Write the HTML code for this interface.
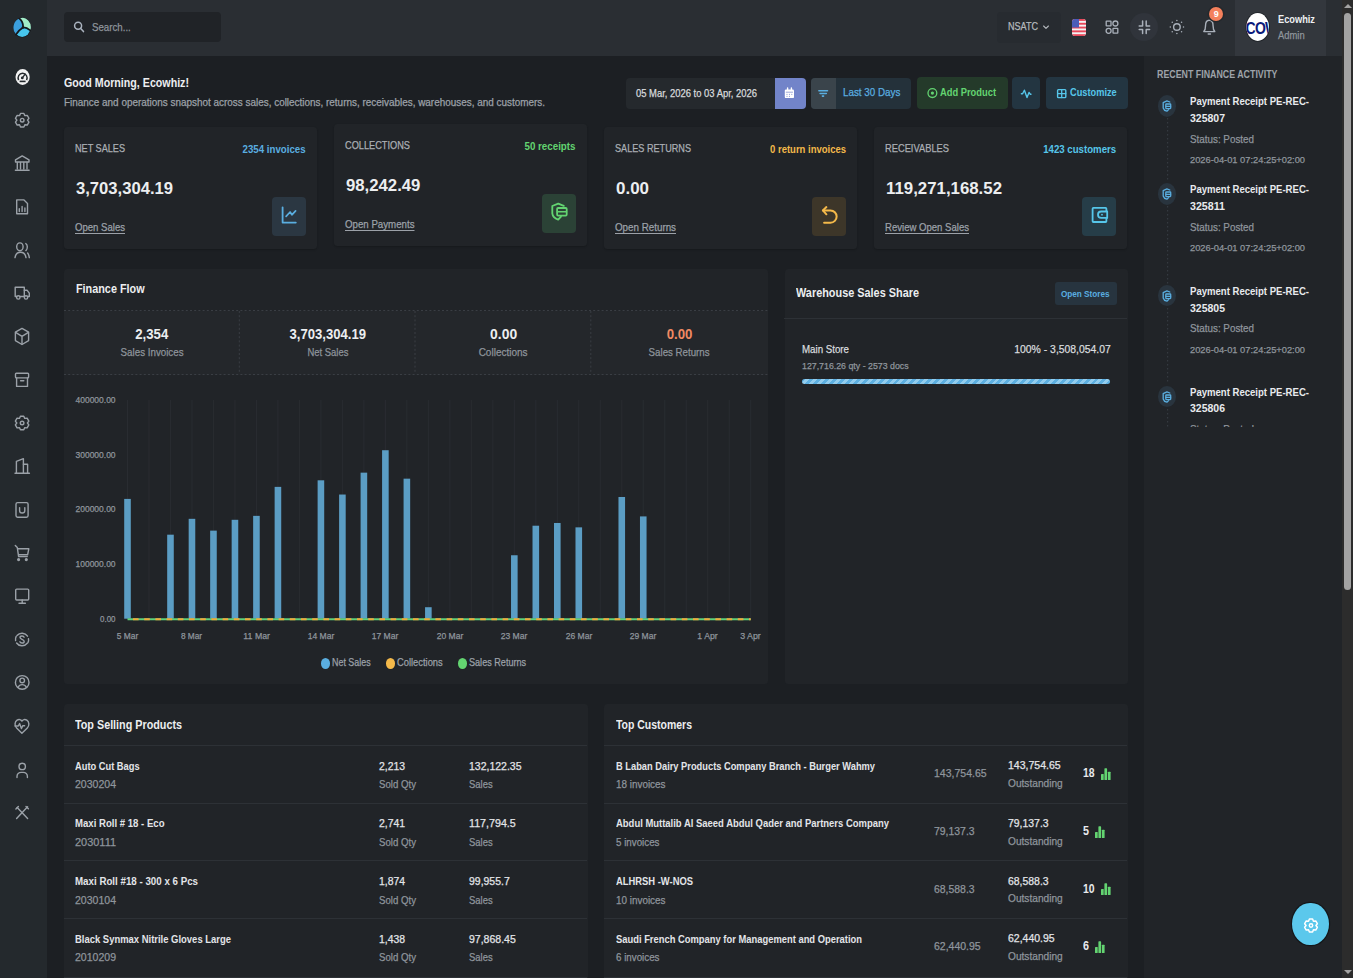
<!DOCTYPE html>
<html><head><meta charset="utf-8">
<style>
*{box-sizing:border-box;margin:0;padding:0}
html,body{width:1353px;height:978px;overflow:hidden;background:#1c1f23;font-family:"Liberation Sans", sans-serif;color:#e3e5e8}
.a{position:absolute}
.t{white-space:nowrap}
.u{text-decoration:underline;text-underline-offset:2px}
</style></head><body>
<div class="a" style="left:0px;top:0px;width:47px;height:978px;background:#24292d;border-radius:0px;"></div>
<div class="a" style="left:47px;top:0px;width:1295px;height:56px;background:#2a2e33;border-radius:0px;"></div>
<div class="a" style="left:1144px;top:56px;width:198px;height:922px;background:#212428;border-radius:0px;"></div>
<div class="a" style="left:1342px;top:0px;width:11px;height:978px;background:#2c2c2c;border-radius:0px;"></div>
<div class="a" style="left:1344px;top:13px;width:7px;height:577px;background:#a3a3a3;border-radius:4px;"></div>
<svg class="a" style="left:1343px;top:2px" width="10" height="8"><path d="M1 6 L5 2 L9 6 Z" fill="#a3a3a3"/></svg>
<svg class="a" style="left:1343px;top:968px" width="10" height="8"><path d="M1 2 L5 6 L9 2 Z" fill="#a3a3a3"/></svg>
<svg class="a" style="left:13px;top:17px" width="18" height="21" viewBox="0 0 18 21">
<ellipse cx="9.2" cy="10.6" rx="8.7" ry="10" fill="#15191d"/>
<ellipse cx="9.2" cy="10.6" rx="8.1" ry="9.4" fill="#47c6ee"/>
<path d="M10 10.5 Q6.5 12.5 3 17.5 A8.1 9.4 0 0 1 6.5 1.6 Q10.5 5 10 10.5Z" fill="#3b9fdd"/>
<path d="M10 10.5 Q10.5 5 6.5 1.6 A8.1 9.4 0 0 1 17.3 13.4 Q13 10 10 10.5Z" fill="#a2ecc8"/>
<path d="M6.5 1.6 Q10.5 5 10 10.5 Q13 10 17.3 13.4 M10 10.5 Q6.5 12.5 3 17.5" fill="none" stroke="#15191d" stroke-width="1.8" stroke-linecap="round"/>
<circle cx="10" cy="10.5" r="1.3" fill="#15191d"/>
</svg>
<svg class="a" style="left:14.5px;top:69px" width="15" height="16" viewBox="0 0 15 16">
<ellipse cx="7.6" cy="8" rx="7.1" ry="7.9" fill="#f2f2f2"/>
<path d="M3.6 11.2 A4.5 4.8 0 1 1 11.6 11.2" fill="none" stroke="#24292d" stroke-width="1.5"/>
<path d="M4.6 12.4 H10.6" stroke="#24292d" stroke-width="1.6"/>
<circle cx="7.3" cy="8.9" r="1.4" fill="#24292d"/>
<path d="M7.3 8.9 L10.2 5.2" stroke="#24292d" stroke-width="1.3" stroke-linecap="round"/>
</svg>
<svg class="a" style="left:0;top:0" width="47" height="978" viewBox="0 0 47 978" fill="none" stroke="#9ba1a8" stroke-width="1.4" stroke-linecap="round" stroke-linejoin="round"><path d="M19.55 115.61 L20.51 113.41 L23.89 113.41 L24.85 115.61 L27.24 115.34 L28.93 118.27 L27.50 120.20 L28.93 122.13 L27.24 125.06 L24.85 124.79 L23.89 126.99 L20.51 126.99 L19.55 124.79 L17.16 125.06 L15.47 122.13 L16.90 120.20 L15.47 118.27 L17.16 115.34Z"/><circle cx="22.2" cy="120.2" r="1.8"/><path d="M15.5 162 V159.8 L22.2 155.9 L29 159.8 V162 Z"/><path d="M17.3 162.5V169M20.5 162.5V169M23.8 162.5V169M27 162.5V169"/><path d="M15.4 170.3H29.1"/><path d="M16.7 199.9 H24 L27.5 203.4 V213.8 H16.7 Z"/><path d="M19.3 211.6V208.8M22.1 211.6V206.4M24.9 211.6V208"/><ellipse cx="19.9" cy="246.8" rx="3.2" ry="3.9"/><path d="M15 257.6 C15.6 254 17.6 252.3 20.5 252.3 C23.4 252.3 25.4 254 26 257.6"/><path d="M25.8 243.6 C27.8 244.6 27.8 249 25.9 250.6"/><path d="M27.6 253 C28.6 254.2 29 255.6 29.3 257.6"/><path d="M16.5 296.5 H15.2 V287.3 H24.3 V296.5 H20"/><path d="M24.3 290.3 H27.2 L29.3 293.2 V296.5 H28"/><circle cx="18.3" cy="297.4" r="1.7"/><circle cx="26" cy="297.4" r="1.7"/><path d="M22 328.4 L28.6 332.2 V340.6 L22 344.5 L15.4 340.6 V332.2 Z"/><path d="M15.6 332.4 L22 336.3 L28.4 332.4 M22 336.3 V344.3"/><rect x="15.5" y="373.2" width="13.1" height="4.7" rx="0.8"/><path d="M16.6 377.9 V386.4 H27.5 V377.9"/><path d="M20.6 380.8 H23.8"/><path d="M19.45 418.41 L20.41 416.21 L23.79 416.21 L24.75 418.41 L27.14 418.14 L28.83 421.07 L27.40 423.00 L28.83 424.93 L27.14 427.86 L24.75 427.59 L23.79 429.79 L20.41 429.79 L19.45 427.59 L17.06 427.86 L15.37 424.93 L16.80 423.00 L15.37 421.07 L17.06 418.14Z"/><circle cx="22.1" cy="423" r="1.8"/><path d="M15 473.2 H29.4"/><path d="M16.4 473 V461.3 L23.4 458.7 V473"/><path d="M23.4 464.2 H27.6 V473"/><rect x="16" y="502.6" width="12.1" height="14.6" rx="1.6"/><path d="M19.6 507.6 V510.4 A2.6 2.6 0 0 0 24.8 510.4 V507.6"/><path d="M15.3 545.5 L17.3 547.6 L18.6 556.6 H27.3 M17.5 548.8 H28.8 L27.6 554.8 H18.4"/><circle cx="18.6" cy="559.6" r="0.9" fill="#9ba1a8"/><circle cx="26.3" cy="559.6" r="0.9" fill="#9ba1a8"/><rect x="15.7" y="589.1" width="13" height="10.9" rx="1"/><path d="M22.2 600 V603 M19 603.2 H25.4"/><path d="M17 635.5 A6.6 6.6 0 0 1 27.5 636.2"/><path d="M27.2 643.3 A6.6 6.6 0 0 1 16.6 643"/><path d="M15.6 640.6 A6.6 6.6 0 0 1 16.2 636.4"/><path d="M28.5 638.6 A6.6 6.6 0 0 1 27.9 642.8"/><path d="M24.1 637.2 C23.8 636.4 23 636 22 636 C20.8 636 20 636.7 20 637.6 C20 639.6 24.2 639.2 24.2 641.4 C24.2 642.4 23.3 643 22 643 C21 643 20.2 642.6 19.9 641.8"/><circle cx="22.2" cy="682.4" r="6.8"/><circle cx="22.2" cy="680.4" r="2.3"/><path d="M17.9 687.3 C19 685.4 20.5 684.6 22.2 684.6 C23.9 684.6 25.4 685.4 26.5 687.3"/><path d="M21.9 733.2 L16.6 728 C14.3 725.7 14.6 721.9 17.1 720.2 C19 719 21 719.6 21.9 721.1 C22.8 719.6 24.9 719 26.8 720.2 C29.3 721.9 29.6 725.7 27.3 728 L21.9 733.2 Z"/><path d="M15 726 H18.3 L19.6 723.6 L21.4 728.6 L22.7 725.8 H24.6"/><circle cx="22.2" cy="766.4" r="3.2"/><path d="M17 777.6 V776.6 C17 774.2 18.8 772.4 21.2 772.4 H23.2 C25.6 772.4 27.4 774.2 27.4 776.6 V777.6"/><path d="M16.6 818.4 L27.6 806.8"/><path d="M17.2 807.6 L27.6 818.4"/><path d="M15.9 808.9 L18.4 806.4"/><path d="M26 806.4 L28.4 808.8"/></svg>
<div class="a" style="left:64px;top:12px;width:157px;height:30px;background:#202327;border-radius:4px;"></div>
<svg class="a" style="left:0;top:0" width="240" height="56" fill="none" stroke="#aab3bf" stroke-width="1.5" stroke-linecap="round"><circle cx="78.1" cy="25.7" r="3.5"/><path d="M80.7 28.4 L83.5 31.6"/></svg>
<div class="a t" style="left:92px;top:22.07px;font-size:11.5px;line-height:11.5px;color:#8f959c;font-weight:400;"><span id="t0" style="display:inline-block;transform:scaleX(0.8429);transform-origin:left;-webkit-text-stroke:0.25px currentColor;">Search...</span></div>
<div class="a" style="left:997px;top:12px;width:64px;height:31px;background:#272b30;border-radius:4px;"></div>
<div class="a t" style="left:1008px;top:21.47px;font-size:11.5px;line-height:11.5px;color:#b5b9be;font-weight:400;"><span id="t1" style="display:inline-block;transform:scaleX(0.7869);transform-origin:left;-webkit-text-stroke:0.25px currentColor;">NSATC</span></div>
<svg class="a" style="left:0;top:0" width="1353" height="56" fill="none" stroke-linecap="round" stroke-linejoin="round"><path d="M1043.6 26 L1046 28.4 L1048.4 26" stroke="#b5b9be" stroke-width="1.1"/><g stroke="#a9b0ba" stroke-width="1.3"><rect x="1106.2" y="21.1" width="4.8" height="4.8" rx="0.4"/><circle cx="1115.4" cy="23.5" r="2.5"/><circle cx="1108.6" cy="30.8" r="2.5"/><rect x="1113" y="28.4" width="4.8" height="4.8" rx="0.4"/></g></svg>
<svg class="a" style="left:1072px;top:18.5px" width="14" height="17" viewBox="0 0 14 17">
<defs><clipPath id="fc"><rect x="0" y="0" width="14" height="17" rx="3"/></clipPath></defs>
<g clip-path="url(#fc)"><rect width="14" height="17" fill="#f3f3f3"/>
<rect y="0" width="14" height="1.9" fill="#e8475a"/><rect y="3.8" width="14" height="1.9" fill="#e8475a"/><rect y="7.6" width="14" height="1.9" fill="#e8475a"/><rect y="11.4" width="14" height="1.9" fill="#e8475a"/><rect y="15.2" width="14" height="1.9" fill="#e8475a"/>
<rect width="7" height="8.5" fill="#4b5cb8"/></g></svg>
<div class="a" style="left:1129.7px;top:13px;width:28px;height:28px;background:#30343b;border-radius:14px;"></div>
<svg class="a" style="left:0;top:0" width="1353" height="56" fill="none" stroke-linecap="round" stroke-linejoin="round"><g stroke="#a9b0ba" stroke-width="1.5"><path d="M1142.6 21.1 V25.9 H1139.2"/><path d="M1146.2 21.1 V25.9 H1149.6"/><path d="M1139.2 29.5 H1142.6 V33.4"/><path d="M1149.6 29.5 H1146.2 V33.4"/></g><circle cx="1176.9" cy="27" r="3.3" stroke="#a9b0ba" stroke-width="1.4"/><circle cx="1183.50" cy="27.00" r="0.75" fill="#a9b0ba" stroke="none"/><circle cx="1181.57" cy="31.67" r="0.75" fill="#a9b0ba" stroke="none"/><circle cx="1176.90" cy="33.60" r="0.75" fill="#a9b0ba" stroke="none"/><circle cx="1172.23" cy="31.67" r="0.75" fill="#a9b0ba" stroke="none"/><circle cx="1170.30" cy="27.00" r="0.75" fill="#a9b0ba" stroke="none"/><circle cx="1172.23" cy="22.33" r="0.75" fill="#a9b0ba" stroke="none"/><circle cx="1176.90" cy="20.40" r="0.75" fill="#a9b0ba" stroke="none"/><circle cx="1181.57" cy="22.33" r="0.75" fill="#a9b0ba" stroke="none"/><path d="M1203.8 31.6 C1205.3 30.2 1205.5 28.6 1205.5 26 C1205.5 22.4 1207.2 20.3 1209.3 20.3 C1211.4 20.3 1213.1 22.4 1213.1 26 C1213.1 28.6 1213.3 30.2 1214.8 31.6 Z" stroke="#a9b0ba" stroke-width="1.4"/><path d="M1208.2 34 H1210.4" stroke="#a9b0ba" stroke-width="1.4"/></svg>
<div class="a" style="left:1209px;top:7px;width:14px;height:14px;background:#f4805c;border-radius:7px;box-shadow:0 0 0 1.5px #24282c"></div>
<div class="a t" style="left:1016.2px;width:400px;text-align:center;top:9.78px;font-size:9px;line-height:9px;color:#ffffff;font-weight:700;"><span id="t2" style="display:inline-block;transform:scaleX(1.0000);transform-origin:center;">9</span></div>
<div class="a" style="left:1235px;top:0px;width:91px;height:56px;background:#33373d;border-radius:0px;"></div>
<svg class="a" style="left:1245px;top:12px" width="26" height="30" viewBox="0 0 26 30">
<defs><clipPath id="av"><ellipse cx="12.7" cy="15" rx="11.3" ry="13.9"/></clipPath></defs>
<ellipse cx="12.7" cy="15" rx="12.2" ry="14.8" fill="#1f2328"/>
<ellipse cx="12.7" cy="15" rx="11.3" ry="13.9" fill="#ffffff"/>
<g clip-path="url(#av)"><text x="0.6" y="22" font-family="Liberation Sans" font-weight="700" font-size="14" fill="#0b1a7a" letter-spacing="-0.8" transform="translate(0,-4.6) scale(1,1.2)">COW</text></g></svg>
<div class="a t" style="left:1277.7px;top:13.69px;font-size:11px;line-height:11px;color:#eef0f2;font-weight:700;"><span id="t3" style="display:inline-block;transform:scaleX(0.8406);transform-origin:left;">Ecowhiz</span></div>
<div class="a t" style="left:1277.7px;top:30.11px;font-size:10.5px;line-height:10.5px;color:#8f959c;font-weight:400;"><span id="t4" style="display:inline-block;transform:scaleX(0.8936);transform-origin:left;-webkit-text-stroke:0.25px currentColor;">Admin</span></div>
<div class="a t" style="left:64.1px;top:76.52px;font-size:12.5px;line-height:12.5px;color:#eceef0;font-weight:700;"><span id="t5" style="display:inline-block;transform:scaleX(0.8532);transform-origin:left;">Good Morning, Ecowhiz!</span></div>
<div class="a t" style="left:64px;top:97.73px;font-size:10px;line-height:10px;color:#9ca1a8;font-weight:400;"><span id="t6" style="display:inline-block;transform:scaleX(0.9924);transform-origin:left;-webkit-text-stroke:0.25px currentColor;">Finance and operations snapshot across sales, collections, returns, receivables, warehouses, and customers.</span></div>
<div class="a" style="left:626px;top:78px;width:148.5px;height:31px;background:#25292d;border-radius:4px 0 0 4px;"></div>
<div class="a t" style="left:636px;top:88.01px;font-size:10.5px;line-height:10.5px;color:#d8dadd;font-weight:400;"><span id="t7" style="display:inline-block;transform:scaleX(0.8972);transform-origin:left;-webkit-text-stroke:0.25px currentColor;">05 Mar, 2026 to 03 Apr, 2026</span></div>
<div class="a" style="left:774.5px;top:78px;width:31px;height:31px;background:#7284c9;border-radius:0 4px 4px 0;"></div>
<div class="a" style="left:811px;top:78px;width:100px;height:31px;background:#24313a;border-radius:4px;"></div>
<div class="a" style="left:811px;top:78px;width:25px;height:31px;background:#3a444b;border-radius:4px 0 0 4px;"></div>
<div class="a" style="left:917px;top:77px;width:90.5px;height:32px;background:#243a2a;border-radius:4px;"></div>
<div class="a" style="left:1012.3px;top:77px;width:27.7px;height:32px;background:#233541;border-radius:4px;"></div>
<div class="a" style="left:1046px;top:77px;width:82px;height:32px;background:#233541;border-radius:4px;"></div>
<svg class="a" style="left:0;top:0" width="1353" height="120" fill="none" stroke-linecap="round" stroke-linejoin="round"><rect x="784.8" y="89.5" width="9.2" height="8.6" rx="1.2" fill="#ffffff"/><path d="M787.6 88 V90.5 M791.4 88 V90.5" stroke="#ffffff" stroke-width="1.4"/><path d="M786.2 92.2 H792.6" stroke="#7284c9" stroke-width="0.7"/><g fill="#7284c9"><circle cx="787" cy="94.3" r="0.55"/><circle cx="789.4" cy="94.3" r="0.55"/><circle cx="791.8" cy="94.3" r="0.55"/><circle cx="787" cy="96.3" r="0.55"/><circle cx="789.4" cy="96.3" r="0.55"/></g><path d="M818.9 90.7 H827.5 M820.1 93.5 H826.3 M822.4 96.1 H823.6" stroke="#5aaee0" stroke-width="1.6"/><circle cx="932.4" cy="93.1" r="4.4" stroke="#63d471" stroke-width="1.3"/><circle cx="932.4" cy="93.1" r="1.6" fill="#63d471"/><path d="M1021.4 93.7 H1022.6 L1024.4 90.2 L1027 97.5 L1029 92.5 L1030.2 94.2 H1031" stroke="#56c6ea" stroke-width="1.4"/><rect x="1057.6" y="89.6" width="8.2" height="8" rx="0.8" stroke="#56c6ea" stroke-width="1.4"/><path d="M1061.7 89.6 V97.6 M1057.6 93.6 H1065.8" stroke="#56c6ea" stroke-width="1.3"/></svg>
<div class="a t" style="left:842.5px;top:87.29px;font-size:11px;line-height:11px;color:#5aaee0;font-weight:400;"><span id="t8" style="display:inline-block;transform:scaleX(0.8925);transform-origin:left;-webkit-text-stroke:0.25px currentColor;">Last 30 Days</span></div>
<div class="a t" style="left:940px;top:87.19px;font-size:11px;line-height:11px;color:#63d471;font-weight:700;"><span id="t9" style="display:inline-block;transform:scaleX(0.8485);transform-origin:left;">Add Product</span></div>
<div class="a t" style="left:1069.7px;top:87.19px;font-size:11px;line-height:11px;color:#56c6ea;font-weight:700;"><span id="t10" style="display:inline-block;transform:scaleX(0.8396);transform-origin:left;">Customize</span></div>
<div class="a" style="left:64px;top:127px;width:253.3px;height:122px;background:#212428;border-radius:3.5px;box-shadow:0 1px 2px rgba(0,0,0,.2)"></div>
<div class="a t" style="left:75.4px;top:143.17px;font-size:11.5px;line-height:11.5px;color:#abafb5;font-weight:400;"><span id="t11" style="display:inline-block;transform:scaleX(0.7927);transform-origin:left;-webkit-text-stroke:0.25px currentColor;">NET SALES</span></div>
<div class="a t" style="right:1047.2px;top:143.59px;font-size:11px;line-height:11px;color:#5aaee0;font-weight:700;"><span id="t12" style="display:inline-block;transform:scaleX(0.8803);transform-origin:right;">2354 invoices</span></div>
<div class="a t" style="left:75.5px;top:180.11px;font-size:17px;line-height:17px;color:#eceef0;font-weight:700;"><span id="t13" style="display:inline-block;transform:scaleX(0.9772);transform-origin:left;">3,703,304.19</span></div>
<div class="a t" style="left:75.4px;top:221.69px;font-size:11px;line-height:11px;color:#9ca1a8;font-weight:400;"><span id="t14" style="display:inline-block;transform:scaleX(0.8698);transform-origin:left;-webkit-text-stroke:0.25px currentColor;text-decoration:underline;text-underline-offset:1.5px;text-decoration-skip-ink:none;text-decoration-thickness:1px;">Open Sales</span></div>
<div class="a" style="left:272px;top:197px;width:34px;height:39px;background:#2b3742;border-radius:4px;"></div>
<svg class="a" style="left:272px;top:197px" width="34" height="39" fill="none" stroke-linecap="round" stroke-linejoin="round"><path d="M10.6 10.3 V25.6 H23.8" stroke="#5aaee0" stroke-width="1.8"/><path d="M14.1 19.3 L18.1 15 L19.9 17.8 L23.6 13.8" stroke="#5aaee0" stroke-width="1.7"/></svg>
<div class="a" style="left:334px;top:124px;width:253.3px;height:122px;background:#212428;border-radius:3.5px;box-shadow:0 1px 2px rgba(0,0,0,.2)"></div>
<div class="a t" style="left:345.4px;top:140.17px;font-size:11.5px;line-height:11.5px;color:#abafb5;font-weight:400;"><span id="t15" style="display:inline-block;transform:scaleX(0.8008);transform-origin:left;-webkit-text-stroke:0.25px currentColor;">COLLECTIONS</span></div>
<div class="a t" style="right:777.2px;top:140.59px;font-size:11px;line-height:11px;color:#63d471;font-weight:700;"><span id="t16" style="display:inline-block;transform:scaleX(0.8872);transform-origin:right;">50 receipts</span></div>
<div class="a t" style="left:345.5px;top:177.11px;font-size:17px;line-height:17px;color:#eceef0;font-weight:700;"><span id="t17" style="display:inline-block;transform:scaleX(0.9836);transform-origin:left;">98,242.49</span></div>
<div class="a t" style="left:345.4px;top:218.69px;font-size:11px;line-height:11px;color:#9ca1a8;font-weight:400;"><span id="t18" style="display:inline-block;transform:scaleX(0.8811);transform-origin:left;-webkit-text-stroke:0.25px currentColor;text-decoration:underline;text-underline-offset:1.5px;text-decoration-skip-ink:none;text-decoration-thickness:1px;">Open Payments</span></div>
<div class="a" style="left:542px;top:194px;width:34px;height:39px;background:#2b4236;border-radius:4px;"></div>
<svg class="a" style="left:542px;top:194px" width="34" height="39" fill="none" stroke-linecap="round" stroke-linejoin="round"><path d="M21.8 11.9 L16.2 9.6 L10.3 12 V19.4 C10.6 22.4 13 24.5 16.2 25.6 L19 22.6" stroke="#63d471" stroke-width="1.8"/><rect x="15.1" y="14" width="9.6" height="7.6" rx="1" fill="#2b4236" stroke="#63d471" stroke-width="1.8"/><path d="M15.4 17.8 H24.4" stroke="#63d471" stroke-width="1.6"/></svg>
<div class="a" style="left:604px;top:127px;width:253.3px;height:122px;background:#212428;border-radius:3.5px;box-shadow:0 1px 2px rgba(0,0,0,.2)"></div>
<div class="a t" style="left:615.4px;top:143.17px;font-size:11.5px;line-height:11.5px;color:#abafb5;font-weight:400;"><span id="t19" style="display:inline-block;transform:scaleX(0.7928);transform-origin:left;-webkit-text-stroke:0.25px currentColor;">SALES RETURNS</span></div>
<div class="a t" style="right:507.20000000000005px;top:143.59px;font-size:11px;line-height:11px;color:#f4b94a;font-weight:700;"><span id="t20" style="display:inline-block;transform:scaleX(0.8632);transform-origin:right;">0 return invoices</span></div>
<div class="a t" style="left:615.5px;top:180.11px;font-size:17px;line-height:17px;color:#eceef0;font-weight:700;"><span id="t21" style="display:inline-block;transform:scaleX(0.9972);transform-origin:left;">0.00</span></div>
<div class="a t" style="left:615.4px;top:221.69px;font-size:11px;line-height:11px;color:#9ca1a8;font-weight:400;"><span id="t22" style="display:inline-block;transform:scaleX(0.8907);transform-origin:left;-webkit-text-stroke:0.25px currentColor;text-decoration:underline;text-underline-offset:1.5px;text-decoration-skip-ink:none;text-decoration-thickness:1px;">Open Returns</span></div>
<div class="a" style="left:812px;top:197px;width:34px;height:39px;background:#3d3629;border-radius:4px;"></div>
<svg class="a" style="left:812px;top:197px" width="34" height="39" fill="none" stroke-linecap="round" stroke-linejoin="round"><path d="M14.4 10.1 L10.9 13.4 L14.4 17.3" stroke="#f4b94a" stroke-width="2"/><path d="M10.9 13.4 H18.5 A6.15 6.15 0 0 1 18.5 25.7 H12.1" stroke="#f4b94a" stroke-width="2"/></svg>
<div class="a" style="left:874px;top:127px;width:253.3px;height:122px;background:#212428;border-radius:3.5px;box-shadow:0 1px 2px rgba(0,0,0,.2)"></div>
<div class="a t" style="left:885.4px;top:143.17px;font-size:11.5px;line-height:11.5px;color:#abafb5;font-weight:400;"><span id="t23" style="display:inline-block;transform:scaleX(0.8096);transform-origin:left;-webkit-text-stroke:0.25px currentColor;">RECEIVABLES</span></div>
<div class="a t" style="right:237.20000000000005px;top:143.59px;font-size:11px;line-height:11px;color:#56c6ea;font-weight:700;"><span id="t24" style="display:inline-block;transform:scaleX(0.8777);transform-origin:right;">1423 customers</span></div>
<div class="a t" style="left:885.5px;top:180.11px;font-size:17px;line-height:17px;color:#eceef0;font-weight:700;"><span id="t25" style="display:inline-block;transform:scaleX(0.9895);transform-origin:left;">119,271,168.52</span></div>
<div class="a t" style="left:885.4px;top:221.69px;font-size:11px;line-height:11px;color:#9ca1a8;font-weight:400;"><span id="t26" style="display:inline-block;transform:scaleX(0.8695);transform-origin:left;-webkit-text-stroke:0.25px currentColor;text-decoration:underline;text-underline-offset:1.5px;text-decoration-skip-ink:none;text-decoration-thickness:1px;">Review Open Sales</span></div>
<div class="a" style="left:1082px;top:197px;width:34px;height:39px;background:#263d48;border-radius:4px;"></div>
<svg class="a" style="left:1082px;top:197px" width="34" height="39" fill="none" stroke-linecap="round" stroke-linejoin="round"><rect x="10.6" y="10.9" width="13.8" height="14.1" rx="0.8" stroke="#56c6ea" stroke-width="1.8"/><path d="M25.2 14.5 H19.2 A3.2 3.2 0 0 0 19.2 20.9 H25.2 Z" fill="#263d48" stroke="#56c6ea" stroke-width="1.8"/><circle cx="20" cy="17.7" r="0.9" fill="#56c6ea"/></svg>
<div class="a" style="left:64px;top:268.6px;width:703.5px;height:415px;background:#212428;border-radius:3.5px;"></div>
<div class="a t" style="left:75.7px;top:283.32px;font-size:12.5px;line-height:12.5px;color:#eceef0;font-weight:700;"><span id="t27" style="display:inline-block;transform:scaleX(0.8663);transform-origin:left;">Finance Flow</span></div>
<div class="a" style="left:64px;top:310.5px;width:703.5px;height:64px;background:#24272b;border-radius:0px;"></div>
<svg class="a" style="left:0;top:0" width="800" height="400" fill="none" stroke="#3a3e44" stroke-width="1" stroke-dasharray="2 2.2"><path d="M64 310.5 H767.5 M64 374.5 H767.5 M239.3 311 V374 M415 311 V374 M590.8 311 V374"/></svg>
<div class="a t" style="left:-48.125px;width:400px;text-align:center;top:325.60px;font-size:15px;line-height:15px;color:#eceef0;font-weight:700;"><span id="t28" style="display:inline-block;transform:scaleX(0.8789);transform-origin:center;">2,354</span></div>
<div class="a t" style="left:-48.125px;width:400px;text-align:center;top:347.27px;font-size:11.5px;line-height:11.5px;color:#8f959c;font-weight:400;"><span id="t29" style="display:inline-block;transform:scaleX(0.8496);transform-origin:center;-webkit-text-stroke:0.25px currentColor;">Sales Invoices</span></div>
<div class="a t" style="left:127.625px;width:400px;text-align:center;top:325.60px;font-size:15px;line-height:15px;color:#eceef0;font-weight:700;"><span id="t30" style="display:inline-block;transform:scaleX(0.8745);transform-origin:center;">3,703,304.19</span></div>
<div class="a t" style="left:127.625px;width:400px;text-align:center;top:347.27px;font-size:11.5px;line-height:11.5px;color:#8f959c;font-weight:400;"><span id="t31" style="display:inline-block;transform:scaleX(0.8223);transform-origin:center;-webkit-text-stroke:0.25px currentColor;">Net Sales</span></div>
<div class="a t" style="left:303.375px;width:400px;text-align:center;top:325.60px;font-size:15px;line-height:15px;color:#eceef0;font-weight:700;"><span id="t32" style="display:inline-block;transform:scaleX(0.9246);transform-origin:center;">0.00</span></div>
<div class="a t" style="left:303.375px;width:400px;text-align:center;top:347.27px;font-size:11.5px;line-height:11.5px;color:#8f959c;font-weight:400;"><span id="t33" style="display:inline-block;transform:scaleX(0.8711);transform-origin:center;-webkit-text-stroke:0.25px currentColor;">Collections</span></div>
<div class="a t" style="left:479.125px;width:400px;text-align:center;top:325.60px;font-size:15px;line-height:15px;color:#f08a63;font-weight:700;"><span id="t34" style="display:inline-block;transform:scaleX(0.8800);transform-origin:center;">0.00</span></div>
<div class="a t" style="left:479.125px;width:400px;text-align:center;top:347.27px;font-size:11.5px;line-height:11.5px;color:#8f959c;font-weight:400;"><span id="t35" style="display:inline-block;transform:scaleX(0.8445);transform-origin:center;-webkit-text-stroke:0.25px currentColor;">Sales Returns</span></div>
<svg class="a" style="left:0;top:0" width="800" height="700"><line x1="127.50" y1="400" x2="127.50" y2="619" stroke="#292c31" stroke-width="1"/><line x1="148.99" y1="400" x2="148.99" y2="619" stroke="#292c31" stroke-width="1"/><line x1="170.48" y1="400" x2="170.48" y2="619" stroke="#292c31" stroke-width="1"/><line x1="191.97" y1="400" x2="191.97" y2="619" stroke="#292c31" stroke-width="1"/><line x1="213.46" y1="400" x2="213.46" y2="619" stroke="#292c31" stroke-width="1"/><line x1="234.95" y1="400" x2="234.95" y2="619" stroke="#292c31" stroke-width="1"/><line x1="256.44" y1="400" x2="256.44" y2="619" stroke="#292c31" stroke-width="1"/><line x1="277.93" y1="400" x2="277.93" y2="619" stroke="#292c31" stroke-width="1"/><line x1="299.42" y1="400" x2="299.42" y2="619" stroke="#292c31" stroke-width="1"/><line x1="320.91" y1="400" x2="320.91" y2="619" stroke="#292c31" stroke-width="1"/><line x1="342.40" y1="400" x2="342.40" y2="619" stroke="#292c31" stroke-width="1"/><line x1="363.89" y1="400" x2="363.89" y2="619" stroke="#292c31" stroke-width="1"/><line x1="385.38" y1="400" x2="385.38" y2="619" stroke="#292c31" stroke-width="1"/><line x1="406.87" y1="400" x2="406.87" y2="619" stroke="#292c31" stroke-width="1"/><line x1="428.36" y1="400" x2="428.36" y2="619" stroke="#292c31" stroke-width="1"/><line x1="449.85" y1="400" x2="449.85" y2="619" stroke="#292c31" stroke-width="1"/><line x1="471.34" y1="400" x2="471.34" y2="619" stroke="#292c31" stroke-width="1"/><line x1="492.83" y1="400" x2="492.83" y2="619" stroke="#292c31" stroke-width="1"/><line x1="514.32" y1="400" x2="514.32" y2="619" stroke="#292c31" stroke-width="1"/><line x1="535.81" y1="400" x2="535.81" y2="619" stroke="#292c31" stroke-width="1"/><line x1="557.30" y1="400" x2="557.30" y2="619" stroke="#292c31" stroke-width="1"/><line x1="578.79" y1="400" x2="578.79" y2="619" stroke="#292c31" stroke-width="1"/><line x1="600.28" y1="400" x2="600.28" y2="619" stroke="#292c31" stroke-width="1"/><line x1="621.77" y1="400" x2="621.77" y2="619" stroke="#292c31" stroke-width="1"/><line x1="643.26" y1="400" x2="643.26" y2="619" stroke="#292c31" stroke-width="1"/><line x1="664.75" y1="400" x2="664.75" y2="619" stroke="#292c31" stroke-width="1"/><line x1="686.24" y1="400" x2="686.24" y2="619" stroke="#292c31" stroke-width="1"/><line x1="707.73" y1="400" x2="707.73" y2="619" stroke="#292c31" stroke-width="1"/><line x1="729.22" y1="400" x2="729.22" y2="619" stroke="#292c31" stroke-width="1"/><line x1="750.71" y1="400" x2="750.71" y2="619" stroke="#292c31" stroke-width="1"/><rect x="124.20" y="498.91" width="6.6" height="119.79" fill="#5b9dc4"/><rect x="167.18" y="534.68" width="6.6" height="84.02" fill="#5b9dc4"/><rect x="188.67" y="518.82" width="6.6" height="99.88" fill="#5b9dc4"/><rect x="210.16" y="530.63" width="6.6" height="88.07" fill="#5b9dc4"/><rect x="231.65" y="519.80" width="6.6" height="98.90" fill="#5b9dc4"/><rect x="253.14" y="515.86" width="6.6" height="102.84" fill="#5b9dc4"/><rect x="274.63" y="486.87" width="6.6" height="131.83" fill="#5b9dc4"/><rect x="317.61" y="480.31" width="6.6" height="138.39" fill="#5b9dc4"/><rect x="339.10" y="494.53" width="6.6" height="124.17" fill="#5b9dc4"/><rect x="360.59" y="472.65" width="6.6" height="146.05" fill="#5b9dc4"/><rect x="382.08" y="450.22" width="6.6" height="168.48" fill="#5b9dc4"/><rect x="403.57" y="478.67" width="6.6" height="140.03" fill="#5b9dc4"/><rect x="425.06" y="607.21" width="6.6" height="11.49" fill="#5b9dc4"/><rect x="511.02" y="555.25" width="6.6" height="63.45" fill="#5b9dc4"/><rect x="532.51" y="525.71" width="6.6" height="92.99" fill="#5b9dc4"/><rect x="554.00" y="522.98" width="6.6" height="95.73" fill="#5b9dc4"/><rect x="575.49" y="527.35" width="6.6" height="91.35" fill="#5b9dc4"/><rect x="618.47" y="496.99" width="6.6" height="121.71" fill="#5b9dc4"/><rect x="639.96" y="516.41" width="6.6" height="102.29" fill="#5b9dc4"/><line x1="127.5" y1="619.3" x2="750.71" y2="619.3" stroke="#5fd17a" stroke-width="2"/><line x1="133.0" y1="619.3" x2="750.71" y2="619.3" stroke="#f2a93b" stroke-width="2" stroke-dasharray="5.6 5.6"/></svg>
<div class="a t" style="right:1237.5px;top:396.08px;font-size:9px;line-height:9px;color:#8f959c;font-weight:400;"><span id="t36" style="display:inline-block;transform:scaleX(0.9401);transform-origin:right;-webkit-text-stroke:0.25px currentColor;">400000.00</span></div>
<div class="a t" style="right:1237.5px;top:450.78px;font-size:9px;line-height:9px;color:#8f959c;font-weight:400;"><span id="t37" style="display:inline-block;transform:scaleX(0.9401);transform-origin:right;-webkit-text-stroke:0.25px currentColor;">300000.00</span></div>
<div class="a t" style="right:1237.5px;top:505.48px;font-size:9px;line-height:9px;color:#8f959c;font-weight:400;"><span id="t38" style="display:inline-block;transform:scaleX(0.9401);transform-origin:right;-webkit-text-stroke:0.25px currentColor;">200000.00</span></div>
<div class="a t" style="right:1237.5px;top:560.18px;font-size:9px;line-height:9px;color:#8f959c;font-weight:400;"><span id="t39" style="display:inline-block;transform:scaleX(0.9401);transform-origin:right;-webkit-text-stroke:0.25px currentColor;">100000.00</span></div>
<div class="a t" style="right:1237.5px;top:614.88px;font-size:9px;line-height:9px;color:#8f959c;font-weight:400;"><span id="t40" style="display:inline-block;transform:scaleX(0.8841);transform-origin:right;-webkit-text-stroke:0.25px currentColor;">0.00</span></div>
<div class="a t" style="left:-72.5px;width:400px;text-align:center;top:631.68px;font-size:9px;line-height:9px;color:#8f959c;font-weight:400;"><span id="t41" style="display:inline-block;transform:scaleX(0.9298);transform-origin:center;-webkit-text-stroke:0.25px currentColor;">5 Mar</span></div>
<div class="a t" style="left:-8.030000000000001px;width:400px;text-align:center;top:631.68px;font-size:9px;line-height:9px;color:#8f959c;font-weight:400;"><span id="t42" style="display:inline-block;transform:scaleX(0.9211);transform-origin:center;-webkit-text-stroke:0.25px currentColor;">8 Mar</span></div>
<div class="a t" style="left:56.44px;width:400px;text-align:center;top:631.68px;font-size:9px;line-height:9px;color:#8f959c;font-weight:400;"><span id="t43" style="display:inline-block;transform:scaleX(0.9728);transform-origin:center;-webkit-text-stroke:0.25px currentColor;">11 Mar</span></div>
<div class="a t" style="left:120.90999999999997px;width:400px;text-align:center;top:631.68px;font-size:9px;line-height:9px;color:#8f959c;font-weight:400;"><span id="t44" style="display:inline-block;transform:scaleX(0.9495);transform-origin:center;-webkit-text-stroke:0.25px currentColor;">14 Mar</span></div>
<div class="a t" style="left:185.38px;width:400px;text-align:center;top:631.68px;font-size:9px;line-height:9px;color:#8f959c;font-weight:400;"><span id="t45" style="display:inline-block;transform:scaleX(0.9495);transform-origin:center;-webkit-text-stroke:0.25px currentColor;">17 Mar</span></div>
<div class="a t" style="left:249.84999999999997px;width:400px;text-align:center;top:631.68px;font-size:9px;line-height:9px;color:#8f959c;font-weight:400;"><span id="t46" style="display:inline-block;transform:scaleX(0.9495);transform-origin:center;-webkit-text-stroke:0.25px currentColor;">20 Mar</span></div>
<div class="a t" style="left:314.31999999999994px;width:400px;text-align:center;top:631.68px;font-size:9px;line-height:9px;color:#8f959c;font-weight:400;"><span id="t47" style="display:inline-block;transform:scaleX(0.9495);transform-origin:center;-webkit-text-stroke:0.25px currentColor;">23 Mar</span></div>
<div class="a t" style="left:378.78999999999996px;width:400px;text-align:center;top:631.68px;font-size:9px;line-height:9px;color:#8f959c;font-weight:400;"><span id="t48" style="display:inline-block;transform:scaleX(0.9495);transform-origin:center;-webkit-text-stroke:0.25px currentColor;">26 Mar</span></div>
<div class="a t" style="left:443.26px;width:400px;text-align:center;top:631.68px;font-size:9px;line-height:9px;color:#8f959c;font-weight:400;"><span id="t49" style="display:inline-block;transform:scaleX(0.9495);transform-origin:center;-webkit-text-stroke:0.25px currentColor;">29 Mar</span></div>
<div class="a t" style="left:507.7299999999999px;width:400px;text-align:center;top:631.68px;font-size:9px;line-height:9px;color:#8f959c;font-weight:400;"><span id="t50" style="display:inline-block;transform:scaleX(0.9659);transform-origin:center;-webkit-text-stroke:0.25px currentColor;">1 Apr</span></div>
<div class="a t" style="left:550.7099999999999px;width:400px;text-align:center;top:631.68px;font-size:9px;line-height:9px;color:#8f959c;font-weight:400;"><span id="t51" style="display:inline-block;transform:scaleX(0.9802);transform-origin:center;-webkit-text-stroke:0.25px currentColor;">3 Apr</span></div>
<div class="a" style="left:320.90000000000003px;top:657.5px;width:9.4px;height:11px;background:#5aaee0;border-radius:50%;"></div>
<div class="a t" style="left:332.0px;top:657.31px;font-size:10.5px;line-height:10.5px;color:#9ca1a8;font-weight:400;"><span id="t52" style="display:inline-block;transform:scaleX(0.8478);transform-origin:left;-webkit-text-stroke:0.25px currentColor;">Net Sales</span></div>
<div class="a" style="left:385.90000000000003px;top:657.5px;width:9.4px;height:11px;background:#f4b94a;border-radius:50%;"></div>
<div class="a t" style="left:397.0px;top:657.31px;font-size:10.5px;line-height:10.5px;color:#9ca1a8;font-weight:400;"><span id="t53" style="display:inline-block;transform:scaleX(0.8898);transform-origin:left;-webkit-text-stroke:0.25px currentColor;">Collections</span></div>
<div class="a" style="left:457.6px;top:657.5px;width:9.4px;height:11px;background:#63d471;border-radius:50%;"></div>
<div class="a t" style="left:468.7px;top:657.31px;font-size:10.5px;line-height:10.5px;color:#9ca1a8;font-weight:400;"><span id="t54" style="display:inline-block;transform:scaleX(0.8658);transform-origin:left;-webkit-text-stroke:0.25px currentColor;">Sales Returns</span></div>
<div class="a" style="left:784.5px;top:268.8px;width:343.3px;height:414.8px;background:#212428;border-radius:3.5px;"></div>
<div class="a t" style="left:796px;top:287.12px;font-size:12.5px;line-height:12.5px;color:#eceef0;font-weight:700;"><span id="t55" style="display:inline-block;transform:scaleX(0.8706);transform-origin:left;">Warehouse Sales Share</span></div>
<div class="a" style="left:1055px;top:282px;width:61.5px;height:22.5px;background:#27343f;border-radius:3px;"></div>
<div class="a t" style="left:885.7px;width:400px;text-align:center;top:288.56px;font-size:9.5px;line-height:9.5px;color:#5aaee0;font-weight:700;"><span id="t56" style="display:inline-block;transform:scaleX(0.8619);transform-origin:center;">Open Stores</span></div>
<div class="a" style="left:784px;top:317.5px;width:343px;height:1px;background:#2d3136;border-radius:0px;"></div>
<div class="a t" style="left:801.7px;top:343.87px;font-size:11.5px;line-height:11.5px;color:#d9dcdf;font-weight:400;"><span id="t57" style="display:inline-block;transform:scaleX(0.8452);transform-origin:left;-webkit-text-stroke:0.25px currentColor;">Main Store</span></div>
<div class="a t" style="right:242.5999999999999px;top:343.87px;font-size:11.5px;line-height:11.5px;color:#d9dcdf;font-weight:400;"><span id="t58" style="display:inline-block;transform:scaleX(0.9037);transform-origin:right;-webkit-text-stroke:0.25px currentColor;">100% - 3,508,054.07</span></div>
<div class="a t" style="left:801.7px;top:361.06px;font-size:9.5px;line-height:9.5px;color:#8f959c;font-weight:400;"><span id="t59" style="display:inline-block;transform:scaleX(0.9257);transform-origin:left;-webkit-text-stroke:0.25px currentColor;">127,716.26 qty - 2573 docs</span></div>
<div class="a" style="left:801.6px;top:379.3px;width:308.8px;height:5.2px;border-radius:3px;background:repeating-linear-gradient(135deg,#5eb0e1 0 2.8px,#93cdee 2.8px 5.6px)"></div>
<div class="a" style="left:64px;top:704px;width:523.5px;height:290px;background:#212428;border-radius:3.5px;"></div>
<div class="a t" style="left:75.1px;top:719.14px;font-size:12px;line-height:12px;color:#eceef0;font-weight:700;"><span id="t60" style="display:inline-block;transform:scaleX(0.8982);transform-origin:left;">Top Selling Products</span></div>
<div class="a" style="left:64px;top:745px;width:523px;height:1px;background:#2d3136;border-radius:0px;"></div>
<div class="a t" style="left:75.3px;top:760.59px;font-size:11px;line-height:11px;color:#e3e5e8;font-weight:700;"><span id="t61" style="display:inline-block;transform:scaleX(0.8457);transform-origin:left;">Auto Cut Bags</span></div>
<div class="a t" style="left:75.3px;top:779.29px;font-size:11px;line-height:11px;color:#8f959c;font-weight:400;"><span id="t62" style="display:inline-block;transform:scaleX(0.9573);transform-origin:left;-webkit-text-stroke:0.25px currentColor;">2030204</span></div>
<div class="a t" style="left:379.3px;top:760.59px;font-size:11px;line-height:11px;color:#e3e5e8;font-weight:400;"><span id="t63" style="display:inline-block;transform:scaleX(0.9444);transform-origin:left;-webkit-text-stroke:0.25px currentColor;">2,213</span></div>
<div class="a t" style="left:379.3px;top:779.29px;font-size:11px;line-height:11px;color:#8f959c;font-weight:400;"><span id="t64" style="display:inline-block;transform:scaleX(0.8770);transform-origin:left;-webkit-text-stroke:0.25px currentColor;">Sold Qty</span></div>
<div class="a t" style="left:469.1px;top:760.59px;font-size:11px;line-height:11px;color:#e3e5e8;font-weight:400;"><span id="t65" style="display:inline-block;transform:scaleX(0.9535);transform-origin:left;-webkit-text-stroke:0.25px currentColor;">132,122.35</span></div>
<div class="a t" style="left:469.1px;top:779.29px;font-size:11px;line-height:11px;color:#8f959c;font-weight:400;"><span id="t66" style="display:inline-block;transform:scaleX(0.8608);transform-origin:left;-webkit-text-stroke:0.25px currentColor;">Sales</span></div>
<div class="a" style="left:64px;top:802.7px;width:523px;height:1px;background:#2d3136;border-radius:0px;"></div>
<div class="a t" style="left:75.3px;top:818.29px;font-size:11px;line-height:11px;color:#e3e5e8;font-weight:700;"><span id="t67" style="display:inline-block;transform:scaleX(0.8714);transform-origin:left;">Maxi Roll # 18 - Eco</span></div>
<div class="a t" style="left:75.3px;top:836.99px;font-size:11px;line-height:11px;color:#8f959c;font-weight:400;"><span id="t68" style="display:inline-block;transform:scaleX(0.9951);transform-origin:left;-webkit-text-stroke:0.25px currentColor;">2030111</span></div>
<div class="a t" style="left:379.3px;top:818.29px;font-size:11px;line-height:11px;color:#e3e5e8;font-weight:400;"><span id="t69" style="display:inline-block;transform:scaleX(0.9444);transform-origin:left;-webkit-text-stroke:0.25px currentColor;">2,741</span></div>
<div class="a t" style="left:379.3px;top:836.99px;font-size:11px;line-height:11px;color:#8f959c;font-weight:400;"><span id="t70" style="display:inline-block;transform:scaleX(0.8770);transform-origin:left;-webkit-text-stroke:0.25px currentColor;">Sold Qty</span></div>
<div class="a t" style="left:469.1px;top:818.29px;font-size:11px;line-height:11px;color:#e3e5e8;font-weight:400;"><span id="t71" style="display:inline-block;transform:scaleX(0.9725);transform-origin:left;-webkit-text-stroke:0.25px currentColor;">117,794.5</span></div>
<div class="a t" style="left:469.1px;top:836.99px;font-size:11px;line-height:11px;color:#8f959c;font-weight:400;"><span id="t72" style="display:inline-block;transform:scaleX(0.8608);transform-origin:left;-webkit-text-stroke:0.25px currentColor;">Sales</span></div>
<div class="a" style="left:64px;top:860.4000000000001px;width:523px;height:1px;background:#2d3136;border-radius:0px;"></div>
<div class="a t" style="left:75.3px;top:875.99px;font-size:11px;line-height:11px;color:#e3e5e8;font-weight:700;"><span id="t73" style="display:inline-block;transform:scaleX(0.8861);transform-origin:left;">Maxi Roll #18 - 300 x 6 Pcs</span></div>
<div class="a t" style="left:75.3px;top:894.69px;font-size:11px;line-height:11px;color:#8f959c;font-weight:400;"><span id="t74" style="display:inline-block;transform:scaleX(0.9573);transform-origin:left;-webkit-text-stroke:0.25px currentColor;">2030104</span></div>
<div class="a t" style="left:379.3px;top:875.99px;font-size:11px;line-height:11px;color:#e3e5e8;font-weight:400;"><span id="t75" style="display:inline-block;transform:scaleX(0.9444);transform-origin:left;-webkit-text-stroke:0.25px currentColor;">1,874</span></div>
<div class="a t" style="left:379.3px;top:894.69px;font-size:11px;line-height:11px;color:#8f959c;font-weight:400;"><span id="t76" style="display:inline-block;transform:scaleX(0.8770);transform-origin:left;-webkit-text-stroke:0.25px currentColor;">Sold Qty</span></div>
<div class="a t" style="left:469.1px;top:875.99px;font-size:11px;line-height:11px;color:#e3e5e8;font-weight:400;"><span id="t77" style="display:inline-block;transform:scaleX(0.9503);transform-origin:left;-webkit-text-stroke:0.25px currentColor;">99,955.7</span></div>
<div class="a t" style="left:469.1px;top:894.69px;font-size:11px;line-height:11px;color:#8f959c;font-weight:400;"><span id="t78" style="display:inline-block;transform:scaleX(0.8608);transform-origin:left;-webkit-text-stroke:0.25px currentColor;">Sales</span></div>
<div class="a" style="left:64px;top:918.1px;width:523px;height:1px;background:#2d3136;border-radius:0px;"></div>
<div class="a t" style="left:75.3px;top:933.69px;font-size:11px;line-height:11px;color:#e3e5e8;font-weight:700;"><span id="t79" style="display:inline-block;transform:scaleX(0.8591);transform-origin:left;">Black Synmax Nitrile Gloves Large</span></div>
<div class="a t" style="left:75.3px;top:952.39px;font-size:11px;line-height:11px;color:#8f959c;font-weight:400;"><span id="t80" style="display:inline-block;transform:scaleX(0.9573);transform-origin:left;-webkit-text-stroke:0.25px currentColor;">2010209</span></div>
<div class="a t" style="left:379.3px;top:933.69px;font-size:11px;line-height:11px;color:#e3e5e8;font-weight:400;"><span id="t81" style="display:inline-block;transform:scaleX(0.9444);transform-origin:left;-webkit-text-stroke:0.25px currentColor;">1,438</span></div>
<div class="a t" style="left:379.3px;top:952.39px;font-size:11px;line-height:11px;color:#8f959c;font-weight:400;"><span id="t82" style="display:inline-block;transform:scaleX(0.8770);transform-origin:left;-webkit-text-stroke:0.25px currentColor;">Sold Qty</span></div>
<div class="a t" style="left:469.1px;top:933.69px;font-size:11px;line-height:11px;color:#e3e5e8;font-weight:400;"><span id="t83" style="display:inline-block;transform:scaleX(0.9563);transform-origin:left;-webkit-text-stroke:0.25px currentColor;">97,868.45</span></div>
<div class="a t" style="left:469.1px;top:952.39px;font-size:11px;line-height:11px;color:#8f959c;font-weight:400;"><span id="t84" style="display:inline-block;transform:scaleX(0.8608);transform-origin:left;-webkit-text-stroke:0.25px currentColor;">Sales</span></div>
<div class="a" style="left:64px;top:976.5px;width:523px;height:1px;background:#2d3136;border-radius:0px;"></div>
<div class="a" style="left:604.4px;top:704px;width:523.5px;height:290px;background:#212428;border-radius:3.5px;"></div>
<div class="a t" style="left:616px;top:719.14px;font-size:12px;line-height:12px;color:#eceef0;font-weight:700;"><span id="t85" style="display:inline-block;transform:scaleX(0.8723);transform-origin:left;">Top Customers</span></div>
<div class="a" style="left:604px;top:745px;width:523px;height:1px;background:#2d3136;border-radius:0px;"></div>
<div class="a t" style="left:616px;top:760.59px;font-size:11px;line-height:11px;color:#e3e5e8;font-weight:700;"><span id="t86" style="display:inline-block;transform:scaleX(0.8452);transform-origin:left;">B Laban Dairy Products Company Branch - Burger Wahmy</span></div>
<div class="a t" style="left:616px;top:779.29px;font-size:11px;line-height:11px;color:#8f959c;font-weight:400;"><span id="t87" style="display:inline-block;transform:scaleX(0.8992);transform-origin:left;-webkit-text-stroke:0.25px currentColor;">18 invoices</span></div>
<div class="a t" style="left:934.2px;top:768.29px;font-size:11px;line-height:11px;color:#8f959c;font-weight:400;"><span id="t88" style="display:inline-block;transform:scaleX(0.9571);transform-origin:left;-webkit-text-stroke:0.25px currentColor;">143,754.65</span></div>
<div class="a t" style="left:1008px;top:760.29px;font-size:11px;line-height:11px;color:#e3e5e8;font-weight:400;"><span id="t89" style="display:inline-block;transform:scaleX(0.9571);transform-origin:left;-webkit-text-stroke:0.25px currentColor;">143,754.65</span></div>
<div class="a t" style="left:1008px;top:777.99px;font-size:11px;line-height:11px;color:#8f959c;font-weight:400;"><span id="t90" style="display:inline-block;transform:scaleX(0.9220);transform-origin:left;-webkit-text-stroke:0.25px currentColor;">Outstanding</span></div>
<div class="a t" style="left:1082.7px;top:767.14px;font-size:12px;line-height:12px;color:#e8eaed;font-weight:700;"><span id="t91" style="display:inline-block;transform:scaleX(0.8683);transform-origin:left;">18</span></div>
<svg class="a" style="left:1101.0px;top:768.0px" width="10" height="12"><rect x="0" y="6" width="2.7" height="6" rx="0.6" fill="#63d471"/><rect x="3.4" y="0.3" width="2.7" height="11.7" rx="0.6" fill="#63d471"/><rect x="6.9" y="3.7" width="2.7" height="8.3" rx="0.6" fill="#63d471"/></svg>
<div class="a" style="left:604px;top:802.7px;width:523px;height:1px;background:#2d3136;border-radius:0px;"></div>
<div class="a t" style="left:616px;top:818.29px;font-size:11px;line-height:11px;color:#e3e5e8;font-weight:700;"><span id="t92" style="display:inline-block;transform:scaleX(0.8595);transform-origin:left;">Abdul Muttalib Al Saeed Abdul Qader and Partners Company</span></div>
<div class="a t" style="left:616px;top:836.99px;font-size:11px;line-height:11px;color:#8f959c;font-weight:400;"><span id="t93" style="display:inline-block;transform:scaleX(0.8892);transform-origin:left;-webkit-text-stroke:0.25px currentColor;">5 invoices</span></div>
<div class="a t" style="left:934.2px;top:825.99px;font-size:11px;line-height:11px;color:#8f959c;font-weight:400;"><span id="t94" style="display:inline-block;transform:scaleX(0.9480);transform-origin:left;-webkit-text-stroke:0.25px currentColor;">79,137.3</span></div>
<div class="a t" style="left:1008px;top:817.99px;font-size:11px;line-height:11px;color:#e3e5e8;font-weight:400;"><span id="t95" style="display:inline-block;transform:scaleX(0.9480);transform-origin:left;-webkit-text-stroke:0.25px currentColor;">79,137.3</span></div>
<div class="a t" style="left:1008px;top:835.69px;font-size:11px;line-height:11px;color:#8f959c;font-weight:400;"><span id="t96" style="display:inline-block;transform:scaleX(0.9220);transform-origin:left;-webkit-text-stroke:0.25px currentColor;">Outstanding</span></div>
<div class="a t" style="left:1082.7px;top:824.84px;font-size:12px;line-height:12px;color:#e8eaed;font-weight:700;"><span id="t97" style="display:inline-block;transform:scaleX(0.8972);transform-origin:left;">5</span></div>
<svg class="a" style="left:1095.4px;top:825.7px" width="10" height="12"><rect x="0" y="6" width="2.7" height="6" rx="0.6" fill="#63d471"/><rect x="3.4" y="0.3" width="2.7" height="11.7" rx="0.6" fill="#63d471"/><rect x="6.9" y="3.7" width="2.7" height="8.3" rx="0.6" fill="#63d471"/></svg>
<div class="a" style="left:604px;top:860.4000000000001px;width:523px;height:1px;background:#2d3136;border-radius:0px;"></div>
<div class="a t" style="left:616px;top:875.99px;font-size:11px;line-height:11px;color:#e3e5e8;font-weight:700;"><span id="t98" style="display:inline-block;transform:scaleX(0.8535);transform-origin:left;">ALHRSH -W-NOS</span></div>
<div class="a t" style="left:616px;top:894.69px;font-size:11px;line-height:11px;color:#8f959c;font-weight:400;"><span id="t99" style="display:inline-block;transform:scaleX(0.8992);transform-origin:left;-webkit-text-stroke:0.25px currentColor;">10 invoices</span></div>
<div class="a t" style="left:934.2px;top:883.69px;font-size:11px;line-height:11px;color:#8f959c;font-weight:400;"><span id="t100" style="display:inline-block;transform:scaleX(0.9480);transform-origin:left;-webkit-text-stroke:0.25px currentColor;">68,588.3</span></div>
<div class="a t" style="left:1008px;top:875.69px;font-size:11px;line-height:11px;color:#e3e5e8;font-weight:400;"><span id="t101" style="display:inline-block;transform:scaleX(0.9480);transform-origin:left;-webkit-text-stroke:0.25px currentColor;">68,588.3</span></div>
<div class="a t" style="left:1008px;top:893.39px;font-size:11px;line-height:11px;color:#8f959c;font-weight:400;"><span id="t102" style="display:inline-block;transform:scaleX(0.9220);transform-origin:left;-webkit-text-stroke:0.25px currentColor;">Outstanding</span></div>
<div class="a t" style="left:1082.7px;top:882.54px;font-size:12px;line-height:12px;color:#e8eaed;font-weight:700;"><span id="t103" style="display:inline-block;transform:scaleX(0.8683);transform-origin:left;">10</span></div>
<svg class="a" style="left:1101.0px;top:883.4px" width="10" height="12"><rect x="0" y="6" width="2.7" height="6" rx="0.6" fill="#63d471"/><rect x="3.4" y="0.3" width="2.7" height="11.7" rx="0.6" fill="#63d471"/><rect x="6.9" y="3.7" width="2.7" height="8.3" rx="0.6" fill="#63d471"/></svg>
<div class="a" style="left:604px;top:918.1px;width:523px;height:1px;background:#2d3136;border-radius:0px;"></div>
<div class="a t" style="left:616px;top:933.69px;font-size:11px;line-height:11px;color:#e3e5e8;font-weight:700;"><span id="t104" style="display:inline-block;transform:scaleX(0.8527);transform-origin:left;">Saudi French Company for Management and Operation</span></div>
<div class="a t" style="left:616px;top:952.39px;font-size:11px;line-height:11px;color:#8f959c;font-weight:400;"><span id="t105" style="display:inline-block;transform:scaleX(0.8892);transform-origin:left;-webkit-text-stroke:0.25px currentColor;">6 invoices</span></div>
<div class="a t" style="left:934.2px;top:941.39px;font-size:11px;line-height:11px;color:#8f959c;font-weight:400;"><span id="t106" style="display:inline-block;transform:scaleX(0.9543);transform-origin:left;-webkit-text-stroke:0.25px currentColor;">62,440.95</span></div>
<div class="a t" style="left:1008px;top:933.39px;font-size:11px;line-height:11px;color:#e3e5e8;font-weight:400;"><span id="t107" style="display:inline-block;transform:scaleX(0.9543);transform-origin:left;-webkit-text-stroke:0.25px currentColor;">62,440.95</span></div>
<div class="a t" style="left:1008px;top:951.09px;font-size:11px;line-height:11px;color:#8f959c;font-weight:400;"><span id="t108" style="display:inline-block;transform:scaleX(0.9220);transform-origin:left;-webkit-text-stroke:0.25px currentColor;">Outstanding</span></div>
<div class="a t" style="left:1082.7px;top:940.24px;font-size:12px;line-height:12px;color:#e8eaed;font-weight:700;"><span id="t109" style="display:inline-block;transform:scaleX(0.8972);transform-origin:left;">6</span></div>
<svg class="a" style="left:1095.4px;top:941.1px" width="10" height="12"><rect x="0" y="6" width="2.7" height="6" rx="0.6" fill="#63d471"/><rect x="3.4" y="0.3" width="2.7" height="11.7" rx="0.6" fill="#63d471"/><rect x="6.9" y="3.7" width="2.7" height="8.3" rx="0.6" fill="#63d471"/></svg>
<div class="a" style="left:604px;top:976.5px;width:523px;height:1px;background:#2d3136;border-radius:0px;"></div>
<div class="a t" style="left:1156.5px;top:68.91px;font-size:10.5px;line-height:10.5px;color:#9ea3aa;font-weight:700;"><span id="t110" style="display:inline-block;transform:scaleX(0.8419);transform-origin:left;">RECENT FINANCE ACTIVITY</span></div>
<div class="a" style="left:1144px;top:56px;width:198px;height:371px;overflow:hidden">
<svg class="a" style="left:22px;top:62.0px" width="3" height="64.0"><line x1="1.6" y1="0" x2="1.6" y2="400" stroke="#353a40" stroke-width="1.2" stroke-dasharray="1.6 2.4"/></svg>
<div class="a" style="left:14.3px;top:39.3px;width:18px;height:21.4px;border-radius:50%;background:#29343e"></div>
<svg class="a" style="left:18.3px;top:44.0px" width="10" height="12" viewBox="0 0 10 12" fill="none" stroke="#5aaee0" stroke-width="1.3" stroke-linecap="round" stroke-linejoin="round"><path d="M7.8 2 L4.9 0.9 L1.2 2.6 V8 C1.6 9.6 3 10.7 4.9 11.2 L6.6 9.6"/><rect x="3.8" y="4" width="4.9" height="4.6" rx="0.5" fill="#29343e"/><path d="M3.9 6.3 H8.6"/></svg>
<div class="a t" style="left:46px;top:40.29px;font-size:11px;line-height:11px;color:#e8eaed;font-weight:700;"><span id="t111" style="display:inline-block;transform:scaleX(0.8690);transform-origin:left;">Payment Receipt PE-REC-</span></div>
<div class="a t" style="left:46px;top:56.89px;font-size:11px;line-height:11px;color:#e8eaed;font-weight:700;"><span id="t112" style="display:inline-block;transform:scaleX(0.9532);transform-origin:left;">325807</span></div>
<div class="a t" style="left:46px;top:77.59px;font-size:11px;line-height:11px;color:#8f959c;font-weight:400;"><span id="t113" style="display:inline-block;transform:scaleX(0.8945);transform-origin:left;-webkit-text-stroke:0.25px currentColor;">Status: Posted</span></div>
<div class="a t" style="left:46px;top:99.16px;font-size:9.5px;line-height:9.5px;color:#8f959c;font-weight:400;"><span id="t114" style="display:inline-block;transform:scaleX(0.9783);transform-origin:left;-webkit-text-stroke:0.25px currentColor;">2026-04-01 07:24:25+02:00</span></div>
<svg class="a" style="left:22px;top:150.0px" width="3" height="77.7"><line x1="1.6" y1="0" x2="1.6" y2="400" stroke="#353a40" stroke-width="1.2" stroke-dasharray="1.6 2.4"/></svg>
<div class="a" style="left:14.3px;top:127.3px;width:18px;height:21.4px;border-radius:50%;background:#29343e"></div>
<svg class="a" style="left:18.3px;top:132.0px" width="10" height="12" viewBox="0 0 10 12" fill="none" stroke="#5aaee0" stroke-width="1.3" stroke-linecap="round" stroke-linejoin="round"><path d="M7.8 2 L4.9 0.9 L1.2 2.6 V8 C1.6 9.6 3 10.7 4.9 11.2 L6.6 9.6"/><rect x="3.8" y="4" width="4.9" height="4.6" rx="0.5" fill="#29343e"/><path d="M3.9 6.3 H8.6"/></svg>
<div class="a t" style="left:46px;top:128.29px;font-size:11px;line-height:11px;color:#e8eaed;font-weight:700;"><span id="t115" style="display:inline-block;transform:scaleX(0.8690);transform-origin:left;">Payment Receipt PE-REC-</span></div>
<div class="a t" style="left:46px;top:144.89px;font-size:11px;line-height:11px;color:#e8eaed;font-weight:700;"><span id="t116" style="display:inline-block;transform:scaleX(0.9693);transform-origin:left;">325811</span></div>
<div class="a t" style="left:46px;top:165.59px;font-size:11px;line-height:11px;color:#8f959c;font-weight:400;"><span id="t117" style="display:inline-block;transform:scaleX(0.8945);transform-origin:left;-webkit-text-stroke:0.25px currentColor;">Status: Posted</span></div>
<div class="a t" style="left:46px;top:187.16px;font-size:9.5px;line-height:9.5px;color:#8f959c;font-weight:400;"><span id="t118" style="display:inline-block;transform:scaleX(0.9783);transform-origin:left;-webkit-text-stroke:0.25px currentColor;">2026-04-01 07:24:25+02:00</span></div>
<svg class="a" style="left:22px;top:251.7px" width="3" height="76.8"><line x1="1.6" y1="0" x2="1.6" y2="400" stroke="#353a40" stroke-width="1.2" stroke-dasharray="1.6 2.4"/></svg>
<div class="a" style="left:14.3px;top:229.0px;width:18px;height:21.4px;border-radius:50%;background:#29343e"></div>
<svg class="a" style="left:18.3px;top:233.7px" width="10" height="12" viewBox="0 0 10 12" fill="none" stroke="#5aaee0" stroke-width="1.3" stroke-linecap="round" stroke-linejoin="round"><path d="M7.8 2 L4.9 0.9 L1.2 2.6 V8 C1.6 9.6 3 10.7 4.9 11.2 L6.6 9.6"/><rect x="3.8" y="4" width="4.9" height="4.6" rx="0.5" fill="#29343e"/><path d="M3.9 6.3 H8.6"/></svg>
<div class="a t" style="left:46px;top:229.99px;font-size:11px;line-height:11px;color:#e8eaed;font-weight:700;"><span id="t119" style="display:inline-block;transform:scaleX(0.8690);transform-origin:left;">Payment Receipt PE-REC-</span></div>
<div class="a t" style="left:46px;top:246.59px;font-size:11px;line-height:11px;color:#e8eaed;font-weight:700;"><span id="t120" style="display:inline-block;transform:scaleX(0.9532);transform-origin:left;">325805</span></div>
<div class="a t" style="left:46px;top:267.29px;font-size:11px;line-height:11px;color:#8f959c;font-weight:400;"><span id="t121" style="display:inline-block;transform:scaleX(0.8945);transform-origin:left;-webkit-text-stroke:0.25px currentColor;">Status: Posted</span></div>
<div class="a t" style="left:46px;top:288.86px;font-size:9.5px;line-height:9.5px;color:#8f959c;font-weight:400;"><span id="t122" style="display:inline-block;transform:scaleX(0.9783);transform-origin:left;-webkit-text-stroke:0.25px currentColor;">2026-04-01 07:24:25+02:00</span></div>
<svg class="a" style="left:22px;top:352.5px" width="3" height="35.5"><line x1="1.6" y1="0" x2="1.6" y2="400" stroke="#353a40" stroke-width="1.2" stroke-dasharray="1.6 2.4"/></svg>
<div class="a" style="left:14.3px;top:329.8px;width:18px;height:21.4px;border-radius:50%;background:#29343e"></div>
<svg class="a" style="left:18.3px;top:334.5px" width="10" height="12" viewBox="0 0 10 12" fill="none" stroke="#5aaee0" stroke-width="1.3" stroke-linecap="round" stroke-linejoin="round"><path d="M7.8 2 L4.9 0.9 L1.2 2.6 V8 C1.6 9.6 3 10.7 4.9 11.2 L6.6 9.6"/><rect x="3.8" y="4" width="4.9" height="4.6" rx="0.5" fill="#29343e"/><path d="M3.9 6.3 H8.6"/></svg>
<div class="a t" style="left:46px;top:330.79px;font-size:11px;line-height:11px;color:#e8eaed;font-weight:700;"><span id="t123" style="display:inline-block;transform:scaleX(0.8690);transform-origin:left;">Payment Receipt PE-REC-</span></div>
<div class="a t" style="left:46px;top:347.39px;font-size:11px;line-height:11px;color:#e8eaed;font-weight:700;"><span id="t124" style="display:inline-block;transform:scaleX(0.9532);transform-origin:left;">325806</span></div>
<div class="a t" style="left:46px;top:368.09px;font-size:11px;line-height:11px;color:#8f959c;font-weight:400;"><span id="t125" style="display:inline-block;transform:scaleX(0.8945);transform-origin:left;-webkit-text-stroke:0.25px currentColor;">Status: Posted</span></div>
<div class="a t" style="left:46px;top:389.66px;font-size:9.5px;line-height:9.5px;color:#8f959c;font-weight:400;"><span id="t126" style="display:inline-block;transform:scaleX(0.9783);transform-origin:left;-webkit-text-stroke:0.25px currentColor;">2026-04-01 07:24:25+02:00</span></div>
</div>
<div class="a" style="left:1292.2px;top:902.6px;width:36.4px;height:42.8px;background:#5bc8ec;border-radius:50%;box-shadow:0 0 0 1.2px #14171a"></div>
<svg class="a" style="left:1290px;top:900px" width="45" height="50" fill="none" stroke="#ffffff" stroke-width="1.5" stroke-linejoin="round"><path d="M18.55 21.26 L19.40 19.10 L22.60 19.10 L23.45 21.26 L25.75 20.92 L27.34 23.68 L25.90 25.50 L27.34 27.32 L25.75 30.08 L23.45 29.74 L22.60 31.90 L19.40 31.90 L18.55 29.74 L16.25 30.08 L14.66 27.32 L16.10 25.50 L14.66 23.68 L16.25 20.92Z"/><circle cx="21" cy="25.5" r="1.7"/></svg>
</body></html>
